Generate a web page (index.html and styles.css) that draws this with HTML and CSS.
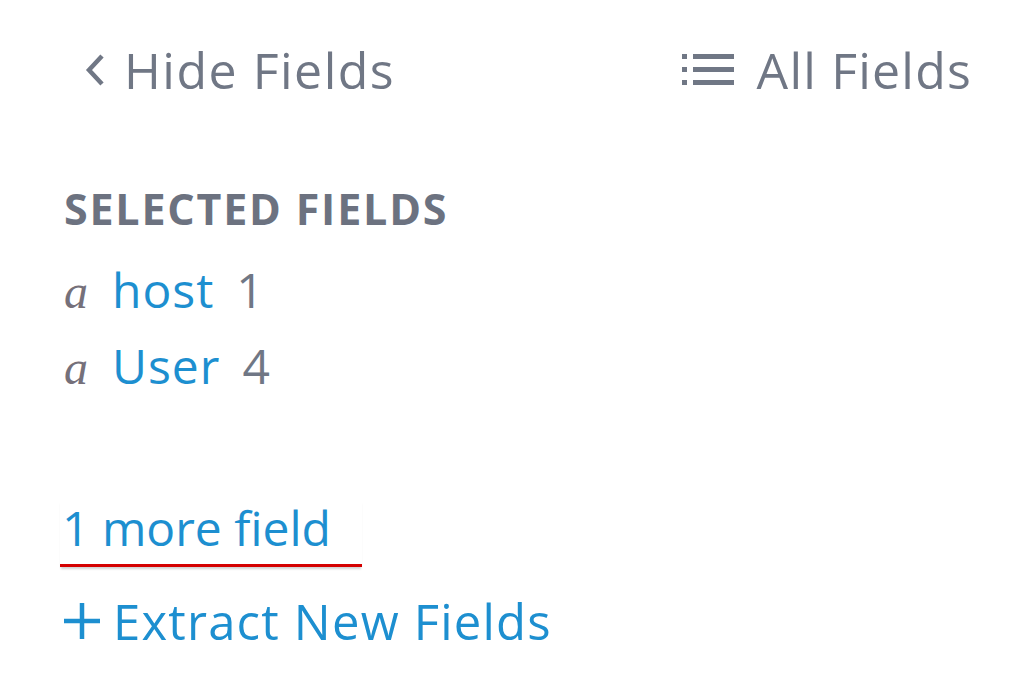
FILE: index.html
```html
<!DOCTYPE html>
<html>
<head>
<meta charset="utf-8">
<link rel="stylesheet" href="styles.css">
</head>
<body>
<div class="panel">
  <div class="header">
    <a class="hide">
      <svg class="chev" width="22" height="34" viewBox="0 0 22 34"><path d="M18 3 L5 17 L18 31" fill="none" stroke="#707785" stroke-width="4.5"/></svg>
      <span>Hide Fields</span>
    </a>
    <a class="all">
      <svg class="list" width="52" height="36" viewBox="0 0 52 36">
        <rect x="0" y="2" width="5" height="5" fill="#707785"/>
        <rect x="0" y="15" width="5" height="5" fill="#707785"/>
        <rect x="0" y="28" width="5" height="5" fill="#707785"/>
        <rect x="11" y="2" width="41" height="5" fill="#707785"/>
        <rect x="11" y="15" width="41" height="5" fill="#707785"/>
        <rect x="11" y="28" width="41" height="5" fill="#707785"/>
      </svg>
      <span>All Fields</span>
    </a>
  </div>
  <div class="section-title">SELECTED FIELDS</div>
  <ul class="fields">
    <li><span class="type">a</span><span class="name">host</span><span class="count">1</span></li>
    <li><span class="type">a</span><span class="name">User</span><span class="count">4</span></li>
  </ul>
  <a class="more">1 more field</a>
  <a class="extract"><svg class="plus" width="38" height="38" viewBox="0 0 38 38"><path d="M19 1 V37 M1 19 H37" stroke="#1d8fd0" stroke-width="4.5" fill="none"/></svg>Extract New Fields</a>
</div>
</body>
</html>
```
FILE: styles.css
```css
html, body { margin: 0; padding: 0; background: #fff; }
body { width: 1035px; height: 686px; overflow: hidden; font-family: "Open Sans", Lato, sans-serif; }
.panel { padding: 40px 63px 0 64px; }
.header { display: flex; justify-content: space-between; align-items: center; height: 60px; padding-left: 20px; }
.hide, .all { display: flex; align-items: center; color: #707785; font-size: 50px; }
.hide { letter-spacing: 1.5px; }
.all { letter-spacing: 1.2px; }
.chev { margin-right: 18px; }
.list { margin-right: 23px; }
.section-title { margin-top: 84px; font-size: 43px; font-weight: 700; color: #6c7280; letter-spacing: 1.8px; line-height: 50px; }
.fields { list-style: none; margin: 26px 0 0; padding: 0; }
.fields li { display: flex; align-items: baseline; height: 76px; line-height: 60px; font-size: 48px; }
.type { font-family: "Liberation Serif", serif; font-style: italic; color: #75707a; width: 48px; font-size: 48px; }
.name { color: #1d8fd0; margin-right: 22px; letter-spacing: 1px; }
.count { color: #707785; }
.more { display: inline-block; margin-top: 88px; color: #1d8fd0; font-size: 48px; line-height: 56px; padding: 0 31px 8px 2px; margin-left: -4px; border-bottom: 3px solid #d40000; box-shadow: 0 3px 2px -1px rgba(0,0,0,0.18); }
.extract { display: flex; align-items: center; margin-top: 26px; color: #1d8fd0; font-size: 49px; letter-spacing: 1.2px; line-height: 56px; }
.plus { margin-right: 12px; margin-left: -1px; }
```
